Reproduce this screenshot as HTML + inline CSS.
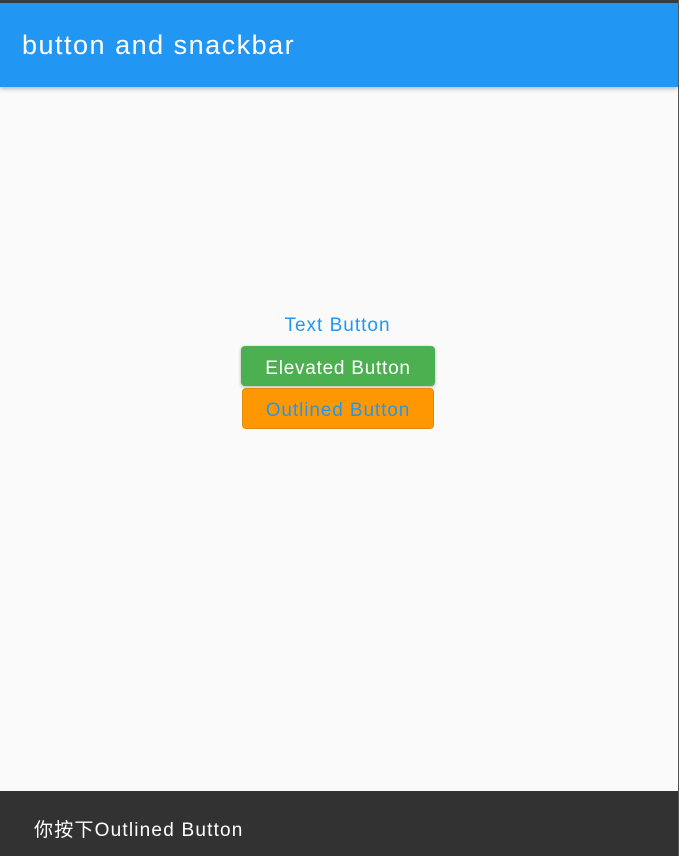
<!DOCTYPE html>
<html><head><meta charset="utf-8"><style>
html,body{margin:0;padding:0;}
body{width:679px;height:856px;position:relative;overflow:hidden;background:#fafafa;font-family:"Liberation Sans","Noto Sans CJK SC",sans-serif;}
.top{position:absolute;left:0;top:0;width:679px;height:3px;background:#3c3c3c;}
.right{position:absolute;right:0;top:0;width:1px;height:856px;background:#555;}
.bar{position:absolute;left:0;top:3px;width:678px;height:84px;background:#2196f3;box-shadow:0 2px 4px rgba(0,0,0,.25);}
.bar span{position:absolute;left:22px;top:27px;font-size:27px;color:#fff;letter-spacing:1.5px;}
.tb{position:absolute;left:240px;width:195px;top:315px;text-align:center;color:#2196f3;font-size:19px;letter-spacing:1px;}
.eb{position:absolute;left:241px;top:346px;width:194px;height:40px;background:#4caf50;border-radius:4px;box-shadow:0 1px 3px rgba(0,0,0,.3);color:#fff;font-size:19px;text-align:center;line-height:46px;letter-spacing:0.75px;}
.ob{position:absolute;left:242px;top:388px;width:190px;height:39px;background:#ff9800;border:1px solid #e08a10;border-radius:4px;color:#2196f3;font-size:19px;text-align:center;line-height:44px;letter-spacing:0.9px;}
.snack{position:absolute;left:0;top:791px;width:679px;height:65px;background:#323232;}
.snack span{position:absolute;left:34px;top:24px;color:#fff;font-size:19px;letter-spacing:1.2px;}
</style></head><body>
<div class="top"></div>
<div class="bar"><span>button and snackbar</span></div>
<div class="tb">Text Button</div>
<div class="eb">Elevated Button</div>
<div class="ob">Outlined Button</div>
<div class="snack"><span>你按下Outlined Button</span></div>
<div class="right"></div>
</body></html>
